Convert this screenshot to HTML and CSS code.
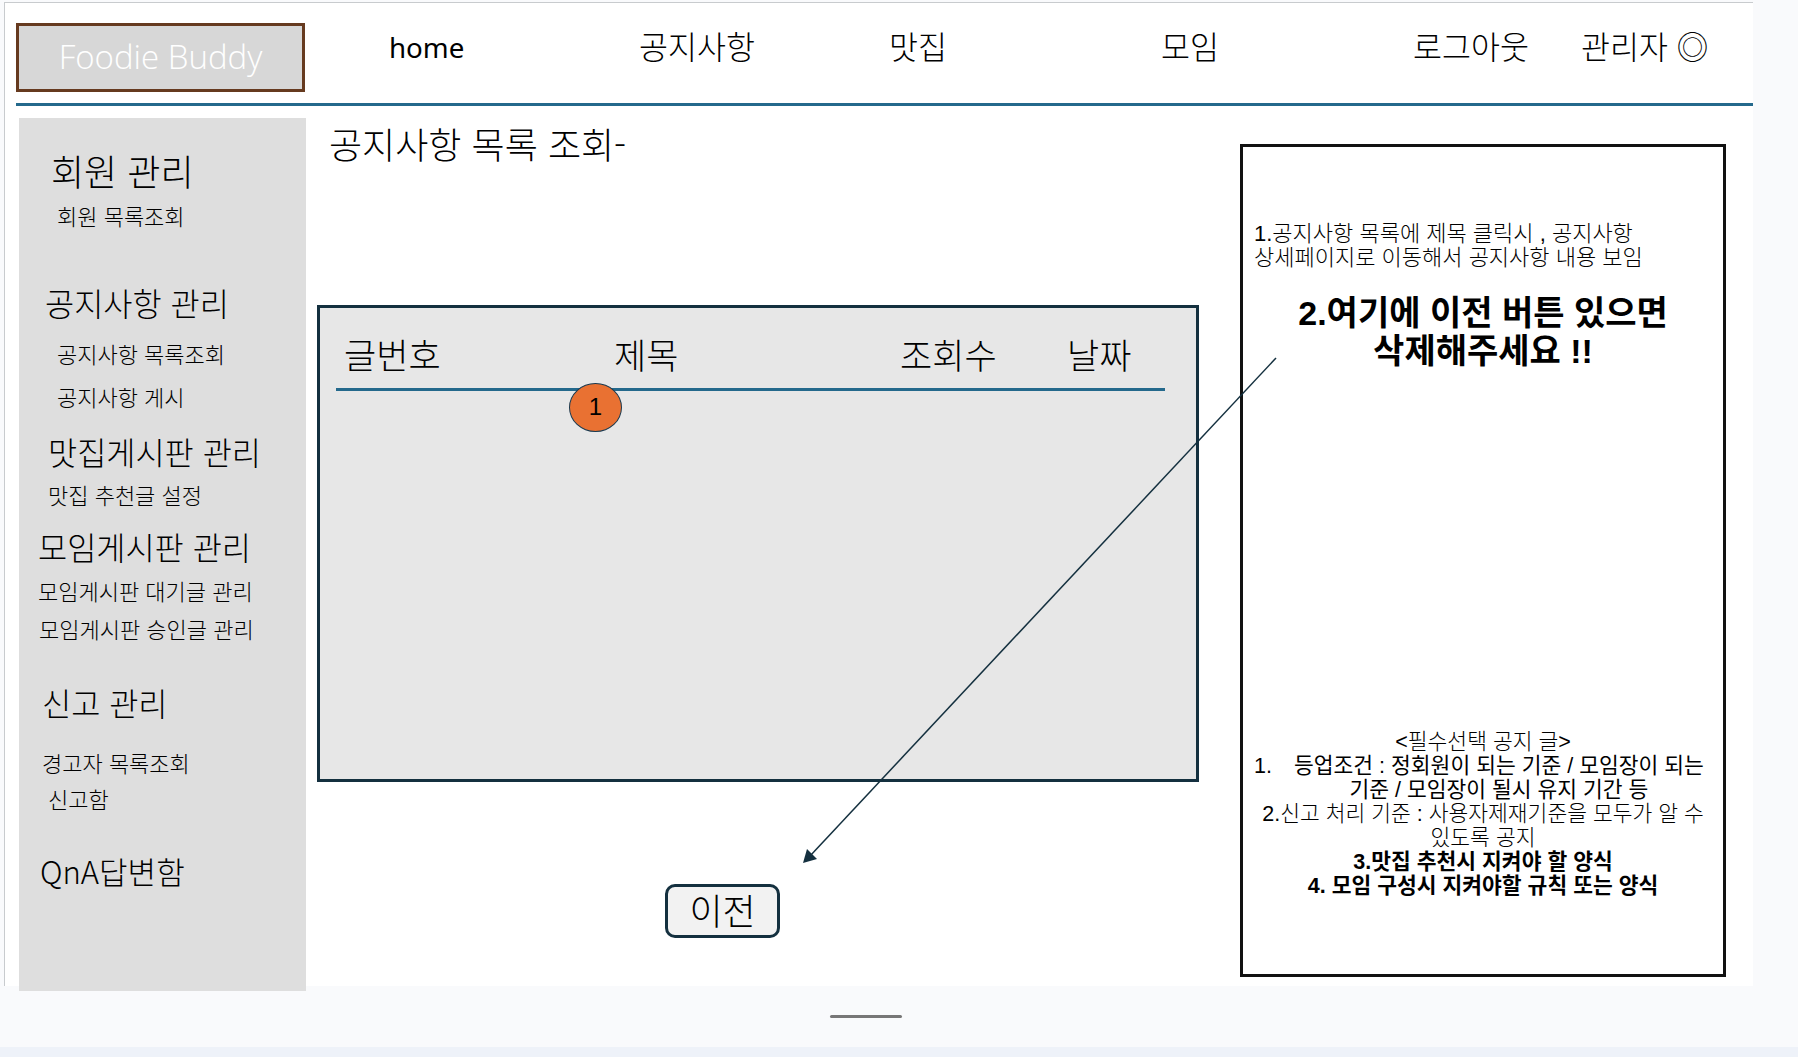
FILE: index.html
```html
<!DOCTYPE html>
<html lang="ko">
<head>
<meta charset="utf-8">
<title>공지사항 목록 조회</title>
<link rel="stylesheet" href="styles.css">
</head>
<body>
<div class="slide">
  <header class="top">
    <div class="logo">Foodie Buddy</div>
    <nav class="nav">
      <a class="nav-home">home</a>
      <a>공지사항</a>
      <a>맛집</a>
      <a>모임</a>
      <a>로그아웃</a>
      <a>관리자 ◎</a>
    </nav>
  </header>
  <div class="rule"></div>
  <div class="body-row">
    <aside class="side">
      <h3 class="big">회원 관리</h3>
      <p class="i-a m-2">회원 목록조회</p>
      <h3 class="i-b m-3">공지사항 관리</h3>
      <p class="i-a m-4">공지사항 목록조회</p>
      <p class="i-a m-5">공지사항 게시</p>
      <h3 class="i-c m-6">맛집게시판 관리</h3>
      <p class="i-c m-7">맛집 추천글 설정</p>
      <h3 class="i-d m-8">모임게시판 관리</h3>
      <p class="i-d m-9">모임게시판 대기글 관리</p>
      <p class="i-e m-10">모임게시판 승인글 관리</p>
      <h3 class="i-f m-11">신고 관리</h3>
      <p class="i-f m-12">경고자 목록조회</p>
      <p class="i-c m-13">신고함</p>
      <h3 class="i-g m-14">QnA답변함</h3>
    </aside>
    <main class="main">
      <h1 class="title">공지사항 목록 조회-</h1>
      <section class="board">
        <div class="board-head">
          <span>글번호</span>
          <span>제목</span>
          <span>조회수</span>
          <span>날짜</span>
        </div>
        <span class="badge">1</span>
      </section>
      <button class="prev">이전</button>
    </main>
    <aside class="notes">
      <p class="note-a">1.공지사항 목록에 제목 클릭시 , 공지사항<br>상세페이지로 이동해서 공지사항 내용 보임</p>
      <p class="note-b">2.여기에 이전 버튼 있으면<br>삭제해주세요 !!</p>
      <div class="note-c">
        <p>&lt;필수선택 공지 글&gt;</p>
        <div class="note-li"><span class="note-num">1.</span><span class="note-txt">등업조건 : 정회원이 되는 기준 / 모임장이 되는<br>기준 / 모임장이 될시 유지 기간 등</span></div>
        <p>2.신고 처리 기준 : 사용자제재기준을 모두가 알 수<br>있도록 공지</p>
        <p class="strong">3.맛집 추천시 지켜야 할 양식</p>
        <p class="strong">4. 모임 구성시 지켜야할 규칙 또는 양식</p>
      </div>
    </aside>
  </div>
  <svg class="arrow" width="1798" height="1057" viewBox="0 0 1798 1057" aria-hidden="true">
    <line x1="1276" y1="358" x2="810" y2="856" class="arrow-line"/>
    <polygon points="803,863 807,849 817,859" class="arrow-head"/>
  </svg>
</div>
<footer class="foot"><span class="handle"></span></footer>
</body>
</html>
```
FILE: styles.css
```css
* { box-sizing: border-box; }
html, body { margin: 0; padding: 0; }
body {
  width: 1798px;
  height: 1057px;
  overflow: hidden;
  background: #f9fafc;
  color: #000;
  font-family: "Noto Sans CJK KR", "Noto Sans", sans-serif;
  font-weight: 300;
  position: relative;
}
p, h1, h3 { margin: 0; font-weight: 300; }

.slide {
  margin: 2px 0 0 4px;
  width: 1749px;
  height: 984px;
  background: #fff;
  border-top: 1px solid #c8cbce;
  border-left: 1px solid #c8cbce;
}
.top { display: flex; height: 100px; padding: 20px 0 0 11px; }
.logo {
  flex: none;
  width: 289px;
  height: 69px;
  border: 3px solid #663a1f;
  background: #d7d7d7;
  color: #fff;
  font-family: "Open Sans", sans-serif;
  font-weight: 300;
  font-size: 33px;
  line-height: 61px;
  text-align: center;
}
.nav {
  display: grid;
  grid-template-columns: 250px 250px 272px 252px 168px 200px;
  padding-left: 84px;
  font-size: 31.5px;
  line-height: 44px;
}
.nav a { display: block; height: 44px; white-space: nowrap; }
.nav-home { font-family: "Noto Sans", sans-serif; font-weight: 400; font-size: 27.7px; margin-top: 2px; }
.rule { height: 3px; margin-left: 11px; background: #24698c; }

.body-row { display: flex; align-items: flex-start; padding: 12px 0 0 14px; }
.side {
  width: 287px;
  height: 873px;
  background: #dedede;
  padding-top: 34px;
  flex: none;
}
.side h3 { font-size: 31.7px; line-height: 36px; padding-bottom: 4px; white-space: nowrap; padding-left: 32px; }
.side .big { font-size: 36px; }
.side p { font-size: 22px; line-height: 26px; padding-bottom: 2px; white-space: nowrap; padding-left: 38px; }
.side .i-a { padding-left: 38px; }
.side .i-b { padding-left: 26px; }
.side .i-c { padding-left: 29px; }
.side .i-d { padding-left: 19px; }
.side .i-e { padding-left: 20px; }
.side .i-f { padding-left: 23px; }
.side .i-g { padding-left: 21px; font-size: 31px; }
.m-2 { margin-top: 10px; }
.m-3 { margin-top: 54px; }
.m-4 { margin-top: 16px; }
.m-5 { margin-top: 15px; }
.m-6 { margin-top: 22px; }
.m-7 { margin-top: 8px; }
.m-8 { margin-top: 19px; }
.m-9 { margin-top: 9px; }
.m-10 { margin-top: 10px; }
.m-11 { margin-top: 41px; }
.m-12 { margin-top: 25px; }
.m-13 { margin-top: 8px; }
.m-14 { margin-top: 40px; }

.main { width: 882px; margin-left: 11px; flex: none; }
.title { font-size: 36px; line-height: 50px; padding-left: 12px; white-space: nowrap; }
.board {
  position: relative;
  height: 477px;
  margin-top: 137px;
  background: #e7e7e7;
  border: 3px solid #14303f;
}
.board-head {
  display: grid;
  grid-template-columns: 270px 286px 167px 1fr;
  margin: 25px 31px 0 16px;
  padding: 0 0 14px 8px;
  border-bottom: 3px solid #24698c;
  font-size: 35px;
  line-height: 41px;
}
.badge {
  position: absolute;
  left: 249px;
  top: 75px;
  width: 53px;
  height: 49px;
  border-radius: 50%;
  background: #e97132;
  border: 1.5px solid #1a3a50;
  font-family: "Liberation Sans", sans-serif;
  font-weight: 400;
  font-size: 24px;
  line-height: 46px;
  text-align: center;
}
.prev {
  display: block;
  width: 115px;
  height: 54px;
  margin: 102px 0 0 348px;
  padding: 0 0 4px;
  background: #f2f2f2;
  border: 3px solid #14303f;
  border-radius: 10px;
  color: #000;
  font-family: inherit;
  font-weight: 300;
  font-size: 36px;
  line-height: 42px;
}

.notes {
  width: 486px;
  height: 833px;
  margin: 26px 0 0 41px;
  flex: none;
  border: 3px solid #111;
  font-family: "Liberation Sans", "Noto Sans CJK KR", sans-serif;
  font-weight: 400;
  padding-top: 75px;
  font-size: 21.5px;
  line-height: 24px;
  white-space: nowrap;
}
.note-a { padding-left: 11px; font-size: 22px; }
.note-b {
  margin-top: 24px;
  font-weight: 700;
  font-size: 34px;
  line-height: 38px;
  text-align: center;
}
.note-c { margin-top: 360px; text-align: center; padding: 0 11px; }
.note-li { display: grid; grid-template-columns: 40px 1fr; }
.note-num { text-align: left; }
.note-txt { text-align: center; margin-right: 9px; }
.strong { font-weight: 700; }

.arrow { position: absolute; left: 0; top: 0; pointer-events: none; }
.arrow-line { stroke: #14303f; stroke-width: 1.5; }
.arrow-head { fill: #14303f; }

.foot { display: block; height: 61px; position: relative; }
.foot::after {
  content: "";
  position: absolute;
  left: 0;
  right: 0;
  top: 61px;
  height: 10px;
  background: #eef2f9;
}
.handle {
  position: absolute;
  left: 830px;
  top: 29px;
  width: 72px;
  height: 3px;
  border-radius: 2px;
  background: #777;
}
```
